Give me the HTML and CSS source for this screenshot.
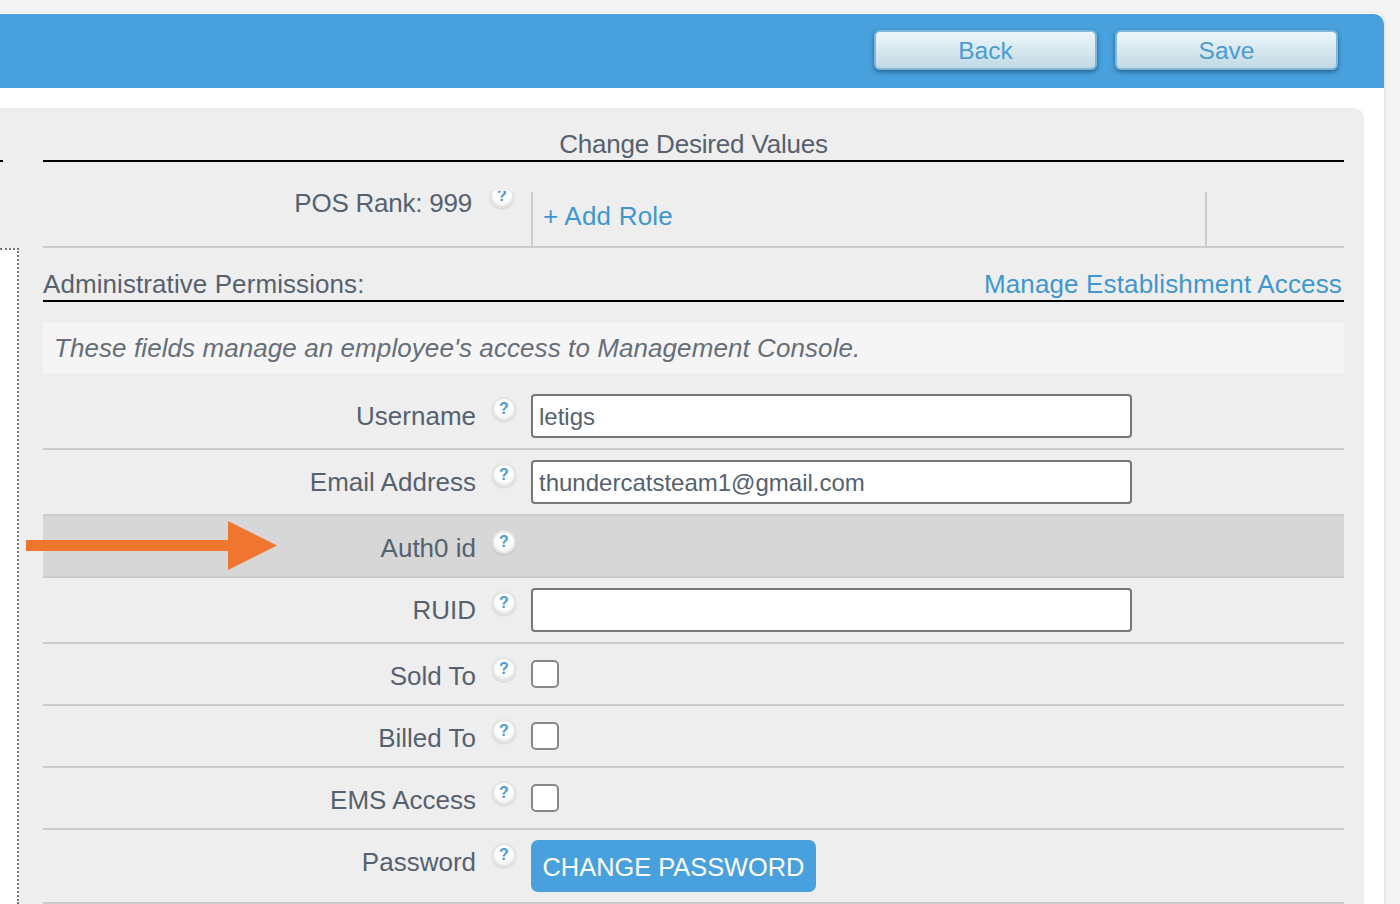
FILE: index.html
```html
<!DOCTYPE html>
<html lang="en">
<head>
<meta charset="UTF-8">
<meta name="viewport" content="width=device-width, initial-scale=1.0">
<link rel="stylesheet" href="styles.css">
<title>Edit Employee</title>
</head>
<body>
<div class="shell">
  <div class="topbar">
    <button class="top-btn">Back</button>
    <button class="top-btn">Save</button>
  </div>
  <div class="panel">
    <div class="side">
      <div class="side-rule"></div>
      <div class="side-box"></div>
    </div>
    <div class="main">
      <h2 class="title">Change Desired Values</h2>

      <div class="rank-row">
        <div class="rank-label">POS Rank: 999</div>
        <div class="rank-help"><span class="help">?</span></div>
        <div class="rank-roles"><a class="link" href="#">+ Add Role</a></div>
      </div>

      <div class="section-head">
        <span class="section-name">Administrative Permissions:</span>
        <a class="link link-manage" href="#">Manage Establishment Access</a>
      </div>
      <p class="note">These fields manage an employee's access to Management Console.</p>

      <div class="row row-first">
        <label class="row-label">Username</label>
        <span class="help">?</span>
        <input class="text-input" type="text" value="letigs">
      </div>
      <div class="row">
        <label class="row-label">Email Address</label>
        <span class="help">?</span>
        <input class="text-input" type="text" value="thundercatsteam1@gmail.com">
      </div>
      <div class="row row-highlight">
        <label class="row-label">Auth0 id</label>
        <span class="help">?</span>
      </div>
      <div class="row">
        <label class="row-label">RUID</label>
        <span class="help">?</span>
        <input class="text-input" type="text">
      </div>
      <div class="row row-check">
        <label class="row-label">Sold To</label>
        <span class="help">?</span>
        <span class="check"></span>
      </div>
      <div class="row row-check">
        <label class="row-label">Billed To</label>
        <span class="help">?</span>
        <span class="check"></span>
      </div>
      <div class="row row-check">
        <label class="row-label">EMS Access</label>
        <span class="help">?</span>
        <span class="check"></span>
      </div>
      <div class="row">
        <label class="row-label">Password</label>
        <span class="help">?</span>
        <button class="change-btn">CHANGE PASSWORD</button>
      </div>
    </div>
  </div>
</div>

<svg class="arrow" width="252" height="50" viewBox="0 0 252 50">
  <path d="M0 19H202V0L251 24.5L202 49V30H0Z" fill="#f0752f"/>
</svg>
</body>
</html>
```

FILE: styles.css
```css
html, body {
  margin: 0;
  padding: 0;
  height: 904px;
  overflow: hidden;
}

body {
  position: relative;
  background-color: #f4f4f4;
  font-family: "Liberation Sans", Arial, sans-serif;
  font-size: 26px;
  color: #56616f;
}

.shell {
  box-sizing: border-box;
  width: 1386px;
  height: 891px;
  margin-top: 13px;
  padding-top: 1px;
  background-color: #fff;
  box-shadow: 0 -1px 0 #e8e8e8;
  border-right: 2px solid #e8e8e8;
  border-top-right-radius: 10px;
}

.topbar {
  display: flex;
  justify-content: flex-end;
  gap: 18px;
  box-sizing: border-box;
  height: 74px;
  padding: 16px 46px 0 0;
  background-color: #48a0dc;
  border-top-right-radius: 10px;
}

.top-btn {
  width: 223px;
  height: 40px;
  padding: 2px 0 0;
  border: 2px solid #7db8d8;
  border-radius: 6px;
  background: linear-gradient(#edf7fb, #c2d9e4);
  box-shadow: 0 2px 4px rgba(20, 70, 110, 0.7);
  font-family: inherit;
  font-size: 24.5px;
  color: #4a9bd0;
}

.panel {
  display: flex;
  width: 1384px;
  height: 796px;
  margin: 20px 0 0 -20px;
  background-color: #eee;
  border-radius: 10px 10px 0 0;
}

.side {
  flex: none;
  width: 38px;
  margin-left: 20px;
}

.side-rule {
  width: 3px;
  height: 2px;
  margin-top: 52px;
  background-color: #000;
}

.side-box {
  height: 654px;
  margin: 86px 19px 0 0;
  background-color: #fff;
  border-top: 2px dotted #777;
  border-right: 2px dotted #777;
}

.main {
  flex: none;
  width: 1301px;
  margin-left: 5px;
}

.title {
  box-sizing: border-box;
  height: 54px;
  margin: 0;
  padding-top: 21px;
  line-height: 30px;
  border-bottom: 2px solid #000;
  font-size: 26px;
  font-weight: normal;
  letter-spacing: -0.19px;
  text-align: center;
}

.rank-row {
  display: flex;
  height: 84px;
  border-bottom: 2px solid #ccc;
}

.rank-label {
  width: 429px;
  padding-top: 26px;
  line-height: 30px;
  letter-spacing: -0.23px;
  text-align: right;
}

.rank-help {
  position: relative;
  width: 59px;
  height: 55px;
  margin-top: 29px;
  overflow: hidden;
}

.rank-help .help {
  position: absolute;
  left: 18px;
  top: -7px;
  margin: 0;
}

.rank-roles {
  width: 662px;
  margin-top: 30px;
  padding-left: 10px;
  padding-top: 9px;
  line-height: 30px;
  letter-spacing: 0.2px;
  border-left: 2px solid #ccc;
  border-right: 2px solid #ccc;
}

.link {
  color: #3f97cf;
  text-decoration: none;
}

.section-head {
  display: flex;
  justify-content: space-between;
  box-sizing: border-box;
  height: 54px;
  padding: 21px 2px 0 0;
  line-height: 30px;
  border-bottom: 2px solid #000;
}

.section-name {
  letter-spacing: 0.08px;
}

.link-manage {
  letter-spacing: 0.15px;
}

.note {
  box-sizing: border-box;
  height: 52px;
  margin: 20px 0 0;
  padding: 10px 11px;
  line-height: 32px;
  background-color: #f5f5f5;
  font-style: italic;
  letter-spacing: 0.08px;
  color: #666e78;
}

.row {
  display: flex;
  align-items: flex-start;
  box-sizing: border-box;
  padding: 10px 0;
  min-height: 64px;
  border-bottom: 2px solid #ccc;
}

.row-first {
  padding-top: 20px;
  height: 76px;
}

.row-label {
  width: 433px;
  padding-top: 7px;
  line-height: 30px;
  text-align: right;
}

.help {
  flex: none;
  display: block;
  box-sizing: border-box;
  width: 24px;
  height: 24px;
  margin: 3px 15px 0 16px;
  border: 2px solid #e4e4e4;
  border-radius: 50%;
  background: radial-gradient(circle at 50% 35%, #fff 50%, #e6e6e6 100%);
  box-shadow: 0 1px 2px rgba(0, 0, 0, 0.15);
  font-size: 16px;
  font-weight: bold;
  line-height: 20px;
  text-align: center;
  color: #4a9bd0;
}

.text-input {
  box-sizing: border-box;
  width: 601px;
  height: 44px;
  padding: 2px 6px 0;
  border: 2px solid #777;
  border-radius: 4px;
  background-color: #fff;
  font-family: inherit;
  font-size: 24px;
  color: #56616f;
  outline: none;
}

.row-highlight {
  height: 63px;
  min-height: 0;
  margin-top: -1px;
  padding-top: 11px;
  background-color: #d7d7d7;
  border-top: 1px solid #ccc;
}

.row-highlight .row-label {
  padding-top: 6px;
}

.row-check {
  height: 62px;
  min-height: 0;
}

.check {
  box-sizing: border-box;
  width: 28px;
  height: 28px;
  margin-top: 6px;
  border: 2px solid #888;
  border-radius: 5px;
  background-color: #fff;
}

.change-btn {
  width: 285px;
  height: 52px;
  padding: 2px 0 0;
  border: none;
  border-radius: 7px;
  background-color: #48a0dc;
  font-family: inherit;
  font-size: 25.4px;
  color: #fff;
}

.arrow {
  position: absolute;
  left: 26px;
  top: 521px;
}
```
